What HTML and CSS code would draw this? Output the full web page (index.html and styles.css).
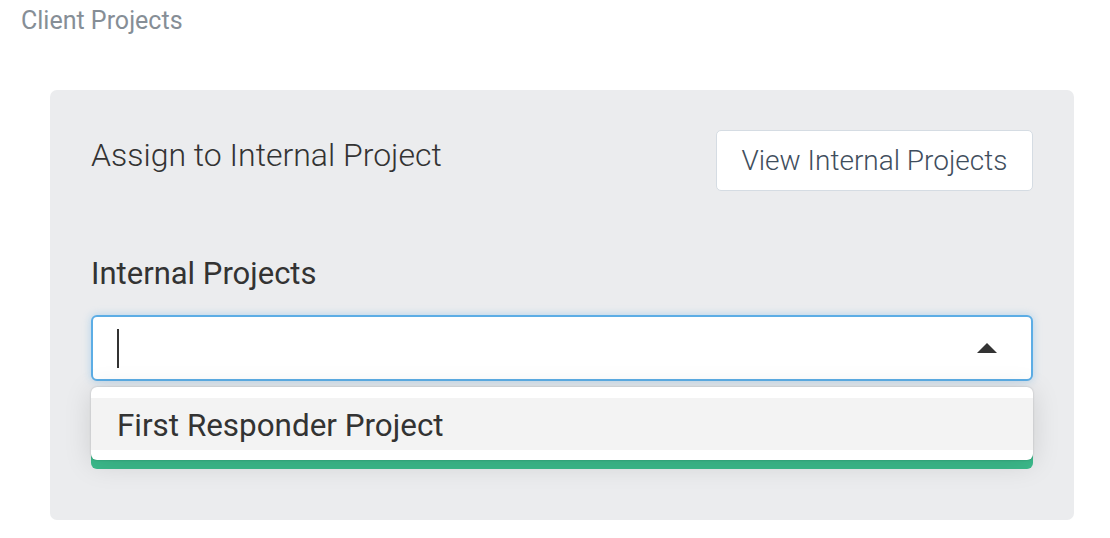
FILE: index.html
```html
<!DOCTYPE html>
<html>
<head>
<meta charset="utf-8">
<link rel="stylesheet" href="styles.css">
</head>
<body>
<div class="page-title">Client Projects</div>
<div class="panel">
  <div class="panel-head">
    <div class="panel-title">Assign to Internal Project</div>
    <button class="btn-outline">View Internal Projects</button>
  </div>
  <div class="field">
    <div class="field-label">Internal Projects</div>
    <div class="select">
      <div class="select-input">
        <span class="cursor"></span>
        <span class="caret"></span>
      </div>
      <div class="menu">
        <div class="option active">First Responder Project</div>
      </div>
    </div>
  </div>
  <button class="btn-green">Assign</button>
</div>
</body>
</html>
```
FILE: styles.css
```css
* { box-sizing: border-box; }
html, body { margin: 0; padding: 0; background: #ffffff; }
body {
  font-family: Roboto, "Liberation Sans", sans-serif;
  width: 1110px;
  height: 538px;
  overflow: hidden;
}
.page-title {
  padding: 6px 0 0 21px;
  height: 90px;
  font-size: 25px;
  line-height: 30px;
  color: #868e96;
  font-weight: 400;
}
.panel {
  margin-left: 50px;
  width: 1024px;
  height: 430px;
  background: #ebecee;
  border-radius: 7px;
  padding: 40px 41px 0 41px;
}
.panel-head {
  display: flex;
  justify-content: space-between;
  align-items: flex-start;
  height: 61px;
}
.panel-title {
  font-size: 32px;
  font-weight: 300;
  color: #333;
  line-height: 38px;
  margin-top: 6px;
}
.btn-outline {
  font-family: Roboto, "Liberation Sans", sans-serif;
  height: 61px;
  width: 317px;
  background: #fff;
  border: 1px solid #d5dce3;
  border-radius: 5px;
  font-size: 28px;
  font-weight: 300;
  color: #3f4e5d;
  padding: 0;
}
.field { margin-top: 65px; }
.field-label {
  font-size: 31px;
  line-height: 36px;
  color: #333;
  font-weight: 400;
  height: 59px;
}
.select { position: relative; }
.select-input {
  height: 66px;
  background: #fff;
  border: 2px solid #5cade5;
  border-radius: 6px;
  box-shadow: 0 0 9px rgba(92, 173, 229, 0.4);
  display: flex;
  align-items: center;
  justify-content: space-between;
  padding: 0 34px 0 24px;
}
.cursor {
  width: 2px;
  height: 39px;
  background: #333;
}
.caret {
  width: 0;
  height: 0;
  border-left: 10px solid transparent;
  border-right: 10px solid transparent;
  border-bottom: 10px solid #333;
}
.menu {
  position: absolute;
  left: 0;
  right: 0;
  top: 72px;
  background: #fff;
  border-radius: 6px;
  padding: 11px 0 10px;
  box-shadow: 0 0 2px rgba(0,0,0,0.22), 0 4px 28px rgba(0,0,0,0.13);
  z-index: 2;
}
.option {
  height: 52px;
  line-height: 56px;
  padding-left: 26px;
  font-size: 31.4px;
  color: #333;
}
.option.active { background: #f3f3f3; }
.btn-green {
  display: block;
  width: 100%;
  margin-top: 24px;
  height: 64px;
  background: #3cbb8c;
  border: none;
  border-radius: 6px;
  color: #fff;
  font-size: 26px;
  font-family: Roboto, "Liberation Sans", sans-serif;
}
```
